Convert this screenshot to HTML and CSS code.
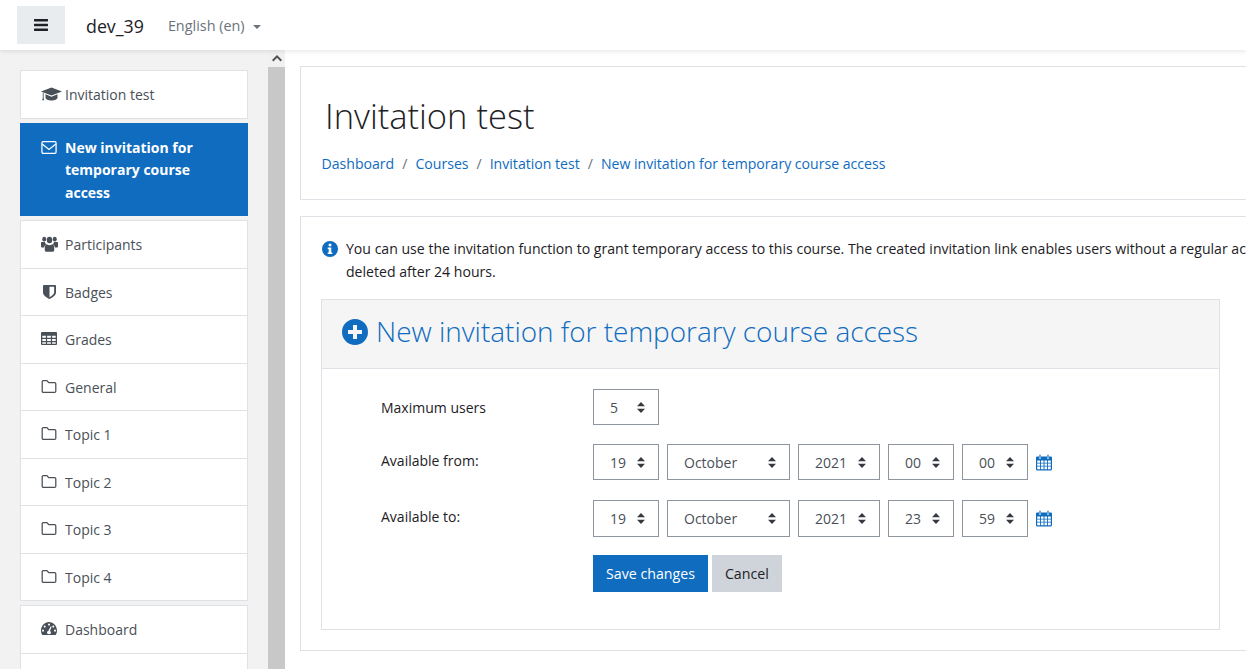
FILE: index.html
```html
<!DOCTYPE html>
<html lang="en">
<head>
<meta charset="utf-8">
<title>New invitation for temporary course access</title>
<link rel="stylesheet" href="styles.css">
</head>
<body>
<svg class="defs" width="0" height="0" aria-hidden="true">
  <symbol id="i-folder" viewBox="0.3 0.3 15.4 13.4"><path d="M2.2 1h3.3c.6 0 1 .3 1.3.8l.5.9c.1.2.3.3.5.3h6c.7 0 1.2.5 1.2 1.2v7.6c0 .7-.5 1.2-1.2 1.2H2.2c-.7 0-1.2-.5-1.2-1.2V2.2C1 1.500 1.500 1 2.200 1z" fill="none" stroke="currentColor" stroke-width="1.300"/></symbol>
  <symbol id="i-cal" viewBox="0 0 16 17"><path fill-rule="evenodd" d="M1.200 2.500H3v1.300c0 .6.400 1 1 1s1-.4 1-1V2.500h6v1.300c0 .6.400 1 1 1s1-.4 1-1V2.500h1.800c.7 0 1.200.5 1.200 1.200v11.600c0 .7-.5 1.200-1.200 1.200H1.200C.5 16.500 0 16 0 15.300V3.700c0-.7.500-1.200 1.200-1.200zM1.200 6.500v2.200h2.900V6.500zm3.800 0v2.200h2.600V6.500zm3.500 0v2.200h2.600V6.500zm3.500 0v2.200h2.800V6.500zM1.200 9.500v2.300h2.900V9.500zm3.800 0v2.300h2.600V9.500zm3.500 0v2.300h2.600V9.500zm3.500 0v2.300h2.800V9.500zM1.200 12.600v2.700h2.900v-2.700zm3.800 0v2.700h2.600v-2.700zm3.500 0v2.700h2.600v-2.700zm3.500 0v2.700h2.800v-2.700z"/><rect x="3.400" y=".5" width="1.200" height="3.500" rx=".6"/><rect x="11.400" y=".5" width="1.200" height="3.500" rx=".6"/></symbol>
</svg>
<header class="topbar">
  <button class="menu-btn" type="button" aria-label="Toggle navigation">
    <svg class="menu-icon" viewBox="0 0 14 12"><path d="M.5 0h13c.3 0 .5.200.5.500v1.500c0 .3-.2.500-.5.500H.5C.2 2.500 0 2.300 0 2V.5C0 .2.200 0 .5 0zm0 4.700h13c.3 0 .5.200.5.500v1.600c0 .3-.2.500-.5.500H.5c-.3 0-.5-.2-.5-.5V5.200c0-.3.200-.5.500-.5zm0 4.800h13c.3 0 .5.200.5.500v1.500c0 .3-.2.500-.5.500H.5c-.3 0-.5-.2-.5-.5V10c0-.3.200-.5.500-.5z"/></svg>
  </button>
  <span class="brand">dev_39</span>
  <span class="lang">English ‎(en)‎<i class="caret"></i></span>
</header>
<div class="layout">
  <aside class="drawer">
    <nav class="drawer-nav">
      <ul class="group">
        <li class="item">
          <svg class="icon icon-cap" viewBox="0 1 20 13.300"><path d="M10 1.500 20 5.200 10 9 0 5.200z"/><path d="M4.300 8v3.200c0 1.500 2.800 2.600 5.700 2.600s5.700-1.100 5.700-2.600V8L10 10.200z"/><path d="M1.700 6.200h.8v5.300l.6 2.200H1.100l.6-2.200z"/></svg>
          <span>Invitation test</span>
        </li>
      </ul>
      <ul class="group">
        <li class="item active">
          <svg class="icon icon-mail" viewBox="0 .3 16 13.400"><rect x=".7" y="1" width="14.600" height="12" rx="1.300" fill="none" stroke="currentColor" stroke-width="1.300"/><path d="M1 3.500 8 9l7-5.500" fill="none" stroke="currentColor" stroke-width="1.300"/></svg>
          <span>New invitation for temporary course access</span>
        </li>
      </ul>
      <ul class="group">
        <li class="item">
          <svg class="icon icon-users" viewBox="0 .5 18 14" preserveAspectRatio="none"><circle cx="3.400" cy="3.300" r="2.100"/><circle cx="14.600" cy="3.300" r="2.100"/><circle cx="9" cy="4" r="2.900"/><path d="M0 6.500c0-.4.300-.8 1-.8h3.200c.2 1 .8 1.700 1.300 2.200-1.200.4-2 1.400-2.200 2.700H1.200C.5 10.600 0 10.300 0 9.700zM18 6.500c0-.4-.3-.8-1-.8h-3.200c-.2 1-.8 1.700-1.300 2.200 1.200.4 2 1.400 2.200 2.700h2.100c.7 0 1.200-.3 1.200-.9z"/><path d="M6.200 7.800c.8.500 1.700.8 2.800.8s2-.3 2.800-.8c1.500.3 2.200 1.600 2.200 3.400v1.500c0 1-.7 1.600-1.800 1.600H5.800C4.700 14.300 4 13.700 4 12.700v-1.500c0-1.800.7-3.100 2.200-3.400z"/></svg>
          <span>Participants</span>
        </li>
        <li class="item">
          <svg class="icon icon-shield" viewBox="2 1 12 14.400" preserveAspectRatio="none"><path fill-rule="evenodd" d="M3 1h10c.6 0 1 .4 1 1v6.500c0 3.300-3.400 5.700-6 6.900-2.600-1.200-6-3.600-6-6.900V2c0-.6.400-1 1-1zm5 1.700v10.800c2-1 4.300-2.900 4.300-5V2.700z"/></svg>
          <span>Badges</span>
        </li>
        <li class="item">
          <svg class="icon icon-grid" viewBox="0 1 16 12" preserveAspectRatio="none"><path fill-rule="evenodd" d="M1.200 1h13.600c.7 0 1.200.5 1.200 1.200v9.600c0 .7-.5 1.200-1.200 1.200H1.200C.5 13 0 12.500 0 11.800V2.200C0 1.500.5 1 1.200 1zM1.300 4.500v1.900h3.600V4.500zm4.800 0v1.900h3.800V4.500zm5 0v1.900h3.600V4.500zM1.300 7.500v1.900h3.600V7.500zm4.800 0v1.900h3.800V7.500zm5 0v1.900h3.600V7.500zM1.300 10.500v1.300h3.600v-1.300zm4.800 0v1.300h3.800v-1.300zm5 0v1.300h3.600v-1.300z"/></svg>
          <span>Grades</span>
        </li>
        <li class="item"><svg class="icon icon-folder"><use href="#i-folder"/></svg><span>General</span></li>
        <li class="item"><svg class="icon icon-folder"><use href="#i-folder"/></svg><span>Topic 1</span></li>
        <li class="item"><svg class="icon icon-folder"><use href="#i-folder"/></svg><span>Topic 2</span></li>
        <li class="item"><svg class="icon icon-folder"><use href="#i-folder"/></svg><span>Topic 3</span></li>
        <li class="item"><svg class="icon icon-folder"><use href="#i-folder"/></svg><span>Topic 4</span></li>
      </ul>
      <ul class="group">
        <li class="item">
          <svg class="icon icon-gauge" viewBox="0 1 16 12" preserveAspectRatio="none"><path fill-rule="evenodd" d="M8 1c4.400 0 8 3.500 8 7.800 0 1.600-.5 3-1.300 4.200H1.300C.5 11.800 0 10.400 0 8.800 0 4.500 3.600 1 8 1zM8 2.400a1 1 0 1 0 0 2 1 1 0 0 0 0-2zM3.700 4.200a1 1 0 1 0 0 2 1 1 0 0 0 0-2zM12.300 4.200a1 1 0 1 0 0 2 1 1 0 0 0 0-2zM2 8a1 1 0 1 0 0 2 1 1 0 0 0 0-2zM14 8a1 1 0 1 0 0 2 1 1 0 0 0 0-2zM9.700 5 7.300 9.300c-.8.200-1.300.8-1.300 1.500 0 .9.900 1.600 2 1.600s2-.7 2-1.600c0-.6-.4-1.100-1-1.400L10.600 5.300z"/></svg>
          <span>Dashboard</span>
        </li>
        <li class="item"></li>
      </ul>
    </nav>
    <div class="scrollbar">
      <div class="scroll-up"><svg viewBox="0 0 10 7"><path d="M5 0 10 5 8.600 6.400 5 2.800 1.400 6.400 0 5z"/></svg></div>
      <div class="scroll-thumb"></div>
    </div>
  </aside>
  <main class="content">
    <section class="card page-head">
      <h1 class="page-title">Invitation test</h1>
      <ol class="crumbs">
        <li><a href="#">Dashboard</a></li>
        <li><a href="#">Courses</a></li>
        <li><a href="#">Invitation test</a></li>
        <li><a href="#">New invitation for temporary course access</a></li>
      </ol>
    </section>
    <section class="card page-body">
      <div class="notice">
        <svg class="info-icon" viewBox="0 0 16 16"><path fill-rule="evenodd" d="M8 0a8 8 0 1 1 0 16A8 8 0 0 1 8 0zM6.700 2.700v2.500h2.600V2.700zM5.700 6.500v1.600h1v3.300h-1V13h4.600v-1.600h-1V6.500z"/></svg>
        <p class="notice-text">You can use the invitation function to grant temporary access to this course. The created invitation link enables users without a regular ac<br>deleted after 24 hours.</p>
      </div>
      <div class="panel">
        <h2 class="panel-head">
          <svg class="plus-icon" viewBox="0 0 26 26"><path fill-rule="evenodd" d="M13 0a13 13 0 1 1 0 26 13 13 0 0 1 0-26zM11 6v5H6v4h5v5h4v-5h5v-4h-5V6z"/></svg>
          <span class="panel-title">New invitation for temporary course access</span>
        </h2>
        <form class="panel-body">
          <div class="row">
            <label class="row-label row-label-users">Maximum users</label>
            <div class="controls">
              <select class="sel sel-s"><option>5</option></select>
            </div>
          </div>
          <div class="row">
            <label class="row-label row-label-date">Available from:</label>
            <div class="controls">
              <select class="sel sel-s"><option>19</option></select>
              <select class="sel sel-l"><option>October</option></select>
              <select class="sel sel-m"><option>2021</option></select>
              <select class="sel sel-s"><option>00</option></select>
              <select class="sel sel-s"><option>00</option></select>
              <svg class="cal-icon"><use href="#i-cal"/></svg>
            </div>
          </div>
          <div class="row row-tall">
            <label class="row-label row-label-date">Available to:</label>
            <div class="controls">
              <select class="sel sel-s"><option>19</option></select>
              <select class="sel sel-l"><option>October</option></select>
              <select class="sel sel-m"><option>2021</option></select>
              <select class="sel sel-s"><option>23</option></select>
              <select class="sel sel-s"><option>59</option></select>
              <svg class="cal-icon"><use href="#i-cal"/></svg>
            </div>
          </div>
          <div class="actions">
            <button class="btn btn-primary" type="button">Save changes</button>
            <button class="btn btn-secondary" type="button">Cancel</button>
          </div>
        </form>
      </div>
    </section>
  </main>
</div>
</body>
</html>
```

FILE: styles.css
```css
* { box-sizing: border-box; }
html, body { margin: 0; height: 100%; overflow: hidden; }
body {
  background: #fff;
  color: #1d2125;
  font-family: "Open Sans", "Noto Sans", sans-serif;
  font-size: 14px;
  line-height: 22.5px;
}
.defs { position: absolute; }
ul, ol { list-style: none; margin: 0; padding: 0; }

.topbar {
  position: relative;
  z-index: 2;
  display: flex;
  align-items: center;
  height: 50px;
  padding-left: 17px;
  background: #fff;
  box-shadow: 0 2px 4px rgba(0, 0, 0, .08);
}
.menu-btn {
  display: flex;
  align-items: center;
  justify-content: center;
  width: 48px;
  height: 38px;
  margin-top: -1px;
  padding: 0;
  border: 0;
  background: #e9ecef;
}
.menu-icon { width: 14px; height: 12px; fill: #1d2125; }
.brand { margin-left: 21px; padding-top: 2px; font-size: 17.800px; color: #1d2125; }
.lang { margin-left: 24px; padding-top: 2px; font-size: 14.400px; color: #6a737b; }
.caret {
  display: inline-block;
  margin-left: 8px;
  vertical-align: 2px;
  border-top: 4.500px solid #6a737b;
  border-left: 4.500px solid transparent;
  border-right: 4.500px solid transparent;
}

.layout { display: flex; height: 619px; }
.drawer { flex: none; display: flex; width: 285px; background: #f2f2f2; overflow: hidden; }
.drawer-nav { flex: none; width: 268px; padding: 20px 20px 0; }
.group { margin-bottom: 4px; background: #fff; border: 1px solid #dee2e6; }
.item {
  display: flex;
  align-items: flex-start;
  min-height: 46.500px;
  padding: 13px 20px 11px;
  color: #495057;
  border-top: 1px solid #dee2e6;
}
.item:first-child { border-top: 0; }
.icon { flex: none; fill: #495057; color: #495057; }
.icon-cap { width: 21px; height: 14px; margin: 3px 3px 0 0; }
.icon-mail { width: 16px; height: 13px; margin: 4px 8px 0 0; }
.icon-users { width: 17px; height: 16px; margin: 2px 7px 0 0; }
.icon-shield { width: 13px; height: 14px; margin: 3px 9px 0 2px; }
.icon-grid { width: 16px; height: 13px; margin: 3px 8px 0 0; }
.icon-folder { width: 16px; height: 13px; margin: 3px 8px 0 0; }
.icon-gauge { width: 16px; height: 13px; margin: 3px 8px 0 0; }
.active { margin: -1px; padding: 14px 21px 12px; background: #0f6cbf; color: #fff; font-weight: 700; border: 0; }
.active .icon { fill: none; color: #fff; }

.scrollbar { flex: none; width: 17px; display: flex; flex-direction: column; background: #f1f1f1; }
.scroll-up { flex: none; height: 17px; display: flex; align-items: center; justify-content: center; }
.scroll-up svg { width: 10px; height: 7px; fill: #505050; }
.scroll-thumb { flex: 1; background: #c8c8c8; }

.content { flex: none; width: 1000px; padding: 16px 0 0 15px; }
.card { background: #fff; border: 1px solid #dee2e6; }
.page-head { height: 134px; padding: 28px 20px 0 20px; margin-bottom: 16px; }
.page-title { margin: 0 0 0 4px; font-size: 34.500px; font-weight: 300; line-height: 42px; color: #1d2125; }
.crumbs { display: flex; margin: 16px 0 0 .5px; font-size: 14.100px; }
.crumbs li + li::before { content: "/"; padding: 0 8px; color: #6a737b; }
.crumbs a { color: #0f6cbf; text-decoration: none; }

.page-body { height: 435px; padding: 21px 20px 20px; }
.notice { display: flex; white-space: nowrap; }
.info-icon { flex: none; width: 16px; height: 16px; margin: 3px 8px 0 1px; fill: #0f6cbf; }
.notice-text { margin: 0; font-size: 14.080px; }

.panel { width: 899px; height: 331px; margin-top: 16px; border: 1px solid #dee2e6; }
.panel-head {
  display: flex;
  align-items: center;
  height: 69px;
  margin: 0;
  padding: 0 0 5px 20px;
  background: #f5f5f5;
  border-bottom: 1px solid #dee2e6;
  color: #0f6cbf;
  font-size: 27.950px;
  font-weight: 300;
  line-height: 32px;
}
.panel-title { margin-top: -2px; }
.plus-icon { flex: none; width: 26px; height: 26px; margin-right: 8px; fill: #0f6cbf; }

.panel-body { padding: 20px 0 0 59px; }
.row { display: flex; height: 36px; margin-bottom: 19.300px; align-items: center; }
.row-tall { height: 37px; margin-bottom: 18.400px; }
.row-tall .sel { height: 37px; }
.row-label { flex: none; width: 212px; color: #1d2125; position: relative; }
.row-label-users { top: 1px; }
.row-label-date { top: -1px; }
.controls { display: flex; align-items: center; gap: 8px; }
.sel {
  appearance: none;
  -webkit-appearance: none;
  height: 36px;
  padding: 0 0 0 16px;
  border: 1px solid #8f959e;
  border-radius: 0;
  background: #fff url("data:image/svg+xml,%3Csvg xmlns='http://www.w3.org/2000/svg' viewBox='0 0 8 11'%3E%3Cpath fill='%23343a40' d='M4 0 8 4.200H0zM4 11 0 6.800H8z'/%3E%3C/svg%3E") no-repeat right 13px center / 8px 11px;
  color: #495057;
  font-family: inherit;
  font-size: 14px;
}
.sel-s { width: 66px; }
.sel-m { width: 82px; }
.sel-l { width: 123px; }
.cal-icon { width: 16px; height: 17px; fill: #0f6cbf; }

.actions { display: flex; gap: 4px; margin-left: 212px; }
.btn { height: 37px; padding: 0 13px; border: 0; border-radius: 0; font-family: inherit; font-size: 14.200px; }
.btn-primary { background: #0f6cbf; color: #fff; }
.btn-secondary { background: #ced4da; color: #1d2125; }
```
